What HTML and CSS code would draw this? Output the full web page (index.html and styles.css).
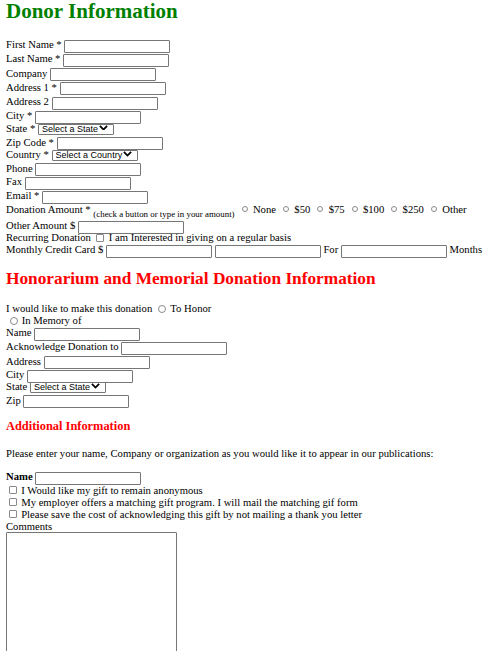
FILE: index.html
```html
<!DOCTYPE html>
<html>
<head>
<meta charset="utf-8">
<link rel="stylesheet" href="styles.css">
</head>
<body>
<h1 class="title-green">Donor Information</h1>
<form class="form">
  <div class="row row-first">First Name * <input class="txt" type="text"></div>
  <div class="row">Last Name * <input class="txt" type="text"></div>
  <div class="row">Company <input class="txt" type="text"></div>
  <div class="row">Address 1 * <input class="txt" type="text"></div>
  <div class="row">Address 2 <input class="txt" type="text"></div>
  <div class="row">City * <input class="txt" type="text"></div>
  <div class="row row-sel">State * <span class="sel-box"><select class="sel sel-state"><option>Select a State</option></select><svg class="chev" viewBox="0 0 10 6"><path d="M1 1l4 4 4-4" fill="none" stroke="#000" stroke-width="2"/></svg></span></div>
  <div class="row">Zip Code * <input class="txt" type="text"></div>
  <div class="row row-sel">Country * <span class="sel-box"><select class="sel sel-country"><option>Select a Country</option></select><svg class="chev" viewBox="0 0 10 6"><path d="M1 1l4 4 4-4" fill="none" stroke="#000" stroke-width="2"/></svg></span></div>
  <div class="row row-tight">Phone <input class="txt" type="text"></div>
  <div class="row row-tight">Fax <input class="txt" type="text"></div>
  <div class="row">Email * <input class="txt" type="text"></div>
  <div class="row row-tight">Donation Amount * <span class="hint">(check a button or type in your amount)</span> <input class="rad rad-sm" type="radio" name="amt"> None <input class="rad rad-sm" type="radio" name="amt"> $50 <input class="rad rad-sm" type="radio" name="amt"> $75 <input class="rad rad-sm" type="radio" name="amt"> $100 <input class="rad rad-sm" type="radio" name="amt"> $250 <input class="rad rad-sm" type="radio" name="amt"> Other</div>
  <div class="row row-loose">Other Amount $ <input class="txt" type="text"></div>
  <div class="row row-flat">Recurring Donation <input class="chk" type="checkbox"> I am Interested in giving on a regular basis</div>
  <div class="row row-flat">Monthly Credit Card $ <input class="txt" type="text"> <input class="txt" type="text"> For <input class="txt" type="text"> Months</div>

  <h2 class="title-red">Honorarium and Memorial Donation Information</h2>
  <div class="row row-flat">I would like to make this donation <input class="rad" type="radio" name="hon"> To Honor</div>
  <div class="row row-flat"><input class="rad" type="radio" name="hon"> In Memory of</div>
  <div class="row row-flat">Name <input class="txt" type="text"></div>
  <div class="row">Acknowledge Donation to <input class="txt" type="text"></div>
  <div class="row">Address <input class="txt" type="text"></div>
  <div class="row row-tight">City <input class="txt" type="text"></div>
  <div class="row row-sel">State <span class="sel-box"><select class="sel sel-state"><option>Select a State</option></select><svg class="chev" viewBox="0 0 10 6"><path d="M1 1l4 4 4-4" fill="none" stroke="#000" stroke-width="2"/></svg></span></div>
  <div class="row row-tight">Zip <input class="txt" type="text"></div>

  <h4 class="title-small">Additional Information</h4>
  <p class="para">Please enter your name, Company or organization as you would like it to appear in our publications:</p>
  <div class="row row-flat"><b>Name</b> <input class="txt" type="text"></div>
  <div class="row row-tight"><input class="chk" type="checkbox"> I Would like my gift to remain anonymous</div>
  <div class="row row-flat"><input class="chk" type="checkbox"> My employer offers a matching gift program. I will mail the matching gif form</div>
  <div class="row row-flat"><input class="chk" type="checkbox"> Please save the cost of acknowledging this gift by not mailing a thank you letter</div>
  <div class="row row-flat">Comments</div>
  <textarea class="comments"></textarea>
</form>
</body>
</html>
```
FILE: styles.css
```css
body {
  margin: 0 6px;
  font-family: "Liberation Serif", "Times New Roman", serif;
  font-size: 10.67px;
  color: #000;
  background: #fff;
}
.title-green {
  color: #008000;
  font-size: 21px;
  font-weight: bold;
  line-height: 22px;
  margin: 0 0 14px;
}
.form {
  margin: 0;
}
.row {
  box-sizing: border-box;
  height: 14.3px;
  padding-top: 2.3px;
  line-height: 12px;
  white-space: nowrap;
}
.row-first {
  height: 14px;
  padding-top: 2px;
}
.row-tight {
  height: 13.5px;
  padding-top: 1.5px;
}
.row-sel {
  height: 12.2px;
  padding-top: 0.2px;
}
.row-flat {
  height: 12px;
  padding-top: 0;
}
.row-loose {
  height: 16.3px;
  padding-top: 4.3px;
}
.txt {
  box-sizing: border-box;
  width: 106px;
  height: 13px;
  margin: 0;
  padding: 0 2px;
  border: 1px solid #767676;
  border-radius: 1px;
  font: 10px "Liberation Sans", Arial, sans-serif;
  vertical-align: -1.5px;
  background: #fff;
}
.sel-box {
  position: relative;
  display: inline-block;
}
.sel {
  -webkit-appearance: none;
  appearance: none;
  box-sizing: border-box;
  height: 11px;
  margin: 0;
  padding: 0 0 0 3px;
  border: 1px solid #767676;
  border-radius: 1px;
  font: 9px "Liberation Sans", Arial, sans-serif;
  line-height: 9px;
  background: #fff;
  color: #000;
}
.sel-state { width: 76px; }
.sel-country { width: 86px; }
.chev {
  position: absolute;
  right: 6px;
  top: 3px;
  width: 9px;
  height: 5.5px;
  pointer-events: none;
}
.hint {
  font-size: 8.9px;
  vertical-align: -4px;
}
.rad {
  -webkit-appearance: none;
  appearance: none;
  box-sizing: border-box;
  width: 8px;
  height: 8px;
  margin: 0 1.5px 0 3.5px;
  border: 1px solid #8a8a8a;
  border-radius: 50%;
  background: #fff;
  vertical-align: -0.5px;
}
.rad-sm {
  width: 6px;
  height: 6px;
  margin: 0 2.5px 0 4.5px;
  vertical-align: 1px;
}
.chk {
  -webkit-appearance: none;
  appearance: none;
  box-sizing: border-box;
  width: 8px;
  height: 8px;
  margin: 0 2px 0 2.5px;
  border: 1px solid #8a8a8a;
  border-radius: 1px;
  background: #fff;
  vertical-align: -0.5px;
}
.title-red {
  color: #ff0000;
  font-size: 17.3px;
  font-weight: bold;
  line-height: 20px;
  margin: 14px 0 12.9px;
}
.title-small {
  color: #ff0000;
  font-size: 12.4px;
  font-weight: bold;
  line-height: 14px;
  margin: 12.9px 0 0;
}
.para {
  line-height: 12px;
  margin: 14.3px 0 11.3px;
}
.comments {
  display: block;
  box-sizing: border-box;
  width: 171px;
  height: 160px;
  margin: 0;
  border: 1px solid #767676;
  border-radius: 1px;
  resize: none;
}
```
